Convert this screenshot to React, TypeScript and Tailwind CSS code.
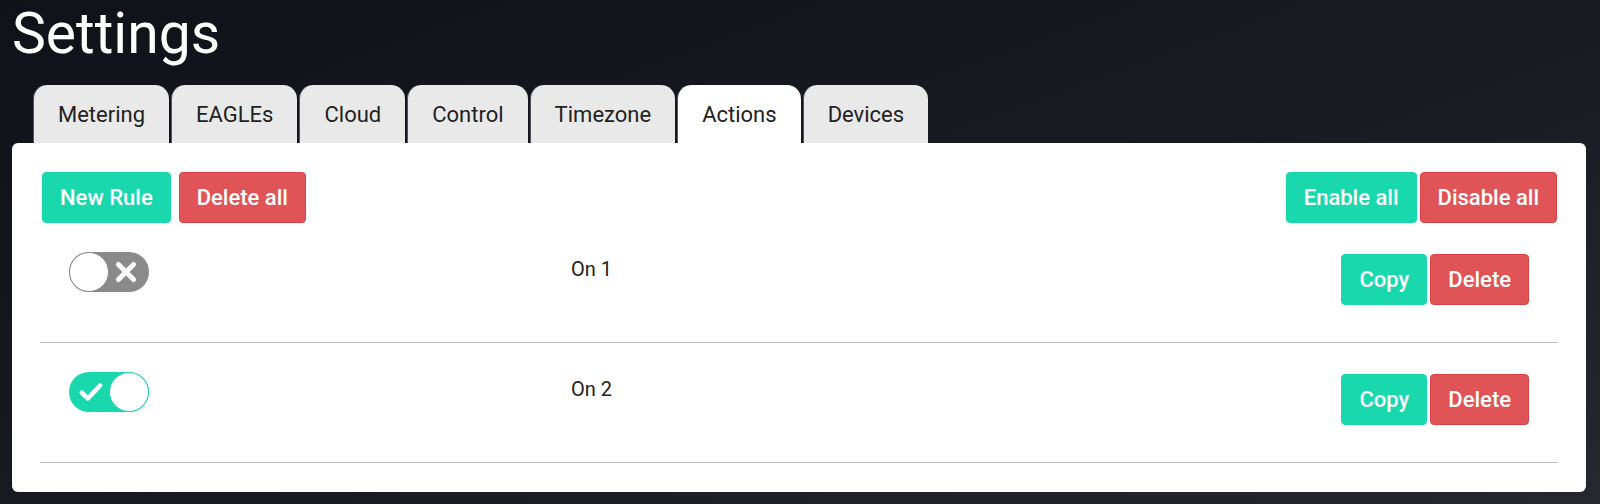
import { useState } from 'react';

const tabs = ['Metering', 'EAGLEs', 'Cloud', 'Control', 'Timezone', 'Actions', 'Devices'];

type Rule = { name: string; enabled: boolean };

function Toggle({ on, onClick }: { on: boolean; onClick: () => void }) {
  return (
    <button
      onClick={onClick}
      className={`relative flex h-[40px] w-[80px] shrink-0 items-center rounded-full ${
        on ? 'bg-[#1ad8ae]' : 'bg-[#8a8a8a]'
      }`}
    >
      {on ? (
        <>
          <svg viewBox="0 0 24 24" className="absolute left-[9px] top-[7px] h-[26px] w-[26px]">
            <path d="M3.5 12.5l5.5 5.5L20.5 6" fill="none" stroke="white" strokeWidth="4.2" strokeLinecap="round" strokeLinejoin="round" />
          </svg>
          <span className="absolute right-0 top-0 h-[40px] w-[40px] rounded-full border border-[#1ad8ae] bg-white" />
        </>
      ) : (
        <>
          <span className="absolute left-0 top-0 h-[40px] w-[40px] rounded-full border border-[#8a8a8a] bg-white" />
          <svg viewBox="0 0 24 24" className="absolute right-[10px] top-[7px] h-[26px] w-[26px]">
            <path d="M5 5l14 14M19 5L5 19" fill="none" stroke="white" strokeWidth="4.6" strokeLinecap="round" />
          </svg>
        </>
      )}
    </button>
  );
}

function Btn({ color, children }: { color: 'green' | 'red'; children: React.ReactNode }) {
  return (
    <button
      className={`rounded-[4px] border px-[17px] py-[8px] text-[22px] leading-[33px] font-medium text-white ${
        color === 'green' ? 'border-[#1ad8ae] bg-[#1ad8ae]' : 'border-[#dc3f45] bg-[#e05357]'
      }`}
    >
      {children}
    </button>
  );
}

export default function App() {
  const [rules, setRules] = useState<Rule[]>([
    { name: 'On 1', enabled: false },
    { name: 'On 2', enabled: true },
  ]);

  return (
    <div
      className="h-[504px] w-full overflow-hidden bg-[linear-gradient(160deg,#111219_0%,#191a22_55%,#26272f_100%)] px-[12px] text-[#222]"
      style={{ fontFamily: 'Roboto, "Liberation Sans", sans-serif' }}
    >
      <div className="h-[85px] pt-[2px]">
        <h1 className="text-[57px] leading-[64px] font-normal text-white">Settings</h1>
      </div>

      <div className="ml-[21px] flex gap-[2px]">
        {tabs.map((t) => (
          <div
            key={t}
            className={`flex h-[58px] items-center rounded-t-[14px] border-l border-[#555] px-[24px] text-[22px] font-normal ${
              t === 'Actions' ? 'bg-white' : 'bg-[#e9e9e9]'
            }`}
          >
            {t}
          </div>
        ))}
      </div>

      <div className="mr-[2px] rounded-[6px] bg-white px-[28px] pt-[29px] pb-[29px]">
        <div className="flex items-start justify-between pl-[2px] pr-[1px]">
          <div className="flex gap-[8px]">
            <Btn color="green">New Rule</Btn>
            <Btn color="red">Delete all</Btn>
          </div>
          <div className="flex gap-[3px]">
            <Btn color="green">Enable all</Btn>
            <Btn color="red">Disable all</Btn>
          </div>
        </div>

        {rules.map((r, i) => (
          <div key={r.name} className="flex items-start border-b border-[#bdbdbd] px-[29px] pt-[29px] pb-[37px]">
            <div className="w-[502px]">
              <Toggle
                on={r.enabled}
                onClick={() =>
                  setRules(rules.map((x, j) => (j === i ? { ...x, enabled: !x.enabled } : x)))
                }
              />
            </div>
            <div className="mt-[2px] flex-1 text-[20px] leading-[30px] font-normal">{r.name}</div>
            <div className="mt-[2px] flex gap-[3px]">
              <Btn color="green">Copy</Btn>
              <Btn color="red">Delete</Btn>
            </div>
          </div>
        ))}
      </div>
    </div>
  );
}
